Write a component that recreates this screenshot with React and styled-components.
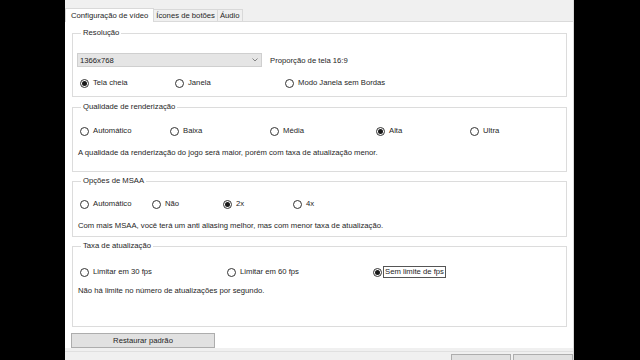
import React from "react";
import styled, { createGlobalStyle } from "styled-components";

const Global = createGlobalStyle`
  html, body { margin: 0; padding: 0; background: #000; }
  body { width: 640px; height: 360px; overflow: hidden; font-family: "Liberation Sans", Arial, sans-serif; }
`;

const Screen = styled.div`
  display: flex;
  width: 640px;
  height: 360px;
  background: #000;
`;

const Window = styled.div`
  margin-left: 65px;
  width: 508px;
  height: 360px;
  background: #f0f0f0;
  border-right: 1px solid #d9d9d9;
  display: flex;
  flex-direction: column;
  font-size: 7.7px;
  color: #1e1e1e;
`;

const TabStrip = styled.div`
  height: 22px;
  display: flex;
  align-items: flex-end;
  background: #f0f0f0;
  border-bottom: 1px solid #dadada;
  box-sizing: border-box;
`;

const Tab = styled.div`
  height: ${(p) => (p.$active ? 14 : 12)}px;
  padding: 0 ${(p) => (p.$active ? 5 : 2)}px;
  display: flex;
  align-items: center;
  background: ${(p) => (p.$active ? "#fff" : "#f0f0f0")};
  border: 1px solid #d9d9d9;
  border-bottom: none;
  margin-left: ${(p) => (p.$active ? 0 : -1)}px;
  margin-bottom: ${(p) => (p.$active ? -1 : 0)}px;
  box-sizing: border-box;
  white-space: nowrap;
`;

const Content = styled.div`
  flex: 1;
  background: #fff;
  display: flex;
  flex-direction: column;
  padding: 4px 6px 0 7px;
`;

const Group = styled.fieldset`
  margin: ${(p) => p.$mt}px 0 0 0;
  padding: 0 0 0 7px;
  height: ${(p) => p.$h}px;
  box-sizing: border-box;
  border: 1px solid #dcdcdc;
  display: flex;
  flex-direction: column;
  min-width: 0;
`;

const Legend = styled.legend`
  padding: 0 2px;
  margin-left: 1px;
  font-size: 7.7px;
  line-height: 10px;
`;

const Row = styled.div`
  display: flex;
  align-items: center;
  margin-top: ${(p) => p.$mt}px;
  height: 14px;
`;

const Select = styled.div`
  width: 185px;
  height: 14px;
  box-sizing: border-box;
  background: #e5e5e5;
  border: 1px solid #cfcfcf;
  display: flex;
  align-items: center;
  justify-content: space-between;
  padding: 0 3px 0 2px;
  margin-left: -3px;
`;

const Chevron = styled.svg`
  width: 6px;
  height: 4px;
`;

const SideLabel = styled.span`
  margin-left: 8px;
`;

const Options = styled.div`
  display: grid;
  grid-template-columns: ${(p) => p.$cols};
  align-items: center;
  margin-top: ${(p) => p.$mt}px;
  height: 12px;
`;

const Option = styled.div`
  display: flex;
  align-items: center;
  gap: 4px;
  white-space: nowrap;
`;

const Circle = styled.span`
  width: 9px;
  height: 9px;
  box-sizing: border-box;
  border-radius: 50%;
  border: 1px solid #333;
  background: #fff;
  display: flex;
  align-items: center;
  justify-content: center;
  flex: none;
  &::after {
    content: "";
    width: 5px;
    height: 5px;
    border-radius: 50%;
    background: #1a1a1a;
    display: ${(p) => (p.$on ? "block" : "none")};
  }
`;

const OptText = styled.span`
  outline: ${(p) => (p.$focus ? "1px solid #555" : "none")};
  padding: ${(p) => (p.$focus ? "0 1px" : "0")};
  margin-left: ${(p) => (p.$focus ? "-2px" : "0")};
  line-height: 10px;
`;

const Note = styled.div`
  margin-top: ${(p) => p.$mt}px;
  margin-left: -2px;
  white-space: nowrap;
`;

const Button = styled.div`
  margin-top: 6px;
  width: 144px;
  height: 15px;
  box-sizing: border-box;
  background: #e1e1e1;
  border: 1px solid #adadad;
  display: flex;
  align-items: center;
  justify-content: center;
  margin-left: -1px;
`;

const Footer = styled.div`
  height: 6px;
  margin-top: 3px;
  background: #f0f0f0;
  border-top: 1px solid #e0e0e0;
  display: flex;
  justify-content: flex-end;
  gap: 2px;
  padding-top: 2px;
`;

const FootBtn = styled.div`
  width: 58px;
  height: 6px;
  background: #e1e1e1;
  border: 1px solid #adadad;
  border-bottom: none;
`;

function Radio({ label, on, focus }) {
  return (
    <Option>
      <Circle $on={on} />
      <OptText $focus={focus}>{label}</OptText>
    </Option>
  );
}

export default function App() {
  return (
    <>
      <Global />
      <Screen>
        <Window>
          <TabStrip>
            <Tab $active>Configuração de vídeo</Tab>
            <Tab>Ícones de botões</Tab>
            <Tab>Áudio</Tab>
          </TabStrip>
          <Content>
            <Group $mt={2} $h={69}>
              <Legend>Resolução</Legend>
              <Row $mt={15}>
                <Select>
                  <span>1366x768</span>
                  <Chevron viewBox="0 0 6 4">
                    <path d="M0.5 0.5 L3 3 L5.5 0.5" fill="none" stroke="#777" strokeWidth="0.9" />
                  </Chevron>
                </Select>
                <SideLabel>Proporção de tela 16:9</SideLabel>
              </Row>
              <Options $mt={10} $cols="95px 110px 1fr">
                <Radio label="Tela cheia" on />
                <Radio label="Janela" />
                <Radio label="Modo Janela sem Bordas" />
              </Options>
            </Group>
            <Group $mt={5} $h={70}>
              <Legend>Qualidade de renderização</Legend>
              <Options $mt={13} $cols="90px 100px 106px 94px 1fr">
                <Radio label="Automático" />
                <Radio label="Baixa" />
                <Radio label="Média" />
                <Radio label="Alta" on />
                <Radio label="Ultra" />
              </Options>
              <Note $mt={11}>A qualidade da renderização do jogo será maior, porém com taxa de atualização menor.</Note>
            </Group>
            <Group $mt={4} $h={61}>
              <Legend>Opções de MSAA</Legend>
              <Options $mt={12} $cols="72px 71px 70px 1fr">
                <Radio label="Automático" />
                <Radio label="Não" />
                <Radio label="2x" on />
                <Radio label="4x" />
              </Options>
              <Note $mt={11}>Com mais MSAA, você terá um anti aliasing melhor, mas com menor taxa de atualização.</Note>
            </Group>
            <Group $mt={4} $h={86}>
              <Legend>Taxa de atualização</Legend>
              <Options $mt={15} $cols="147px 146px 1fr">
                <Radio label="Limitar em 30 fps" />
                <Radio label="Limitar em 60 fps" />
                <Radio label="Sem limite de fps" on focus />
              </Options>
              <Note $mt={8}>Não há limite no número de atualizações por segundo.</Note>
            </Group>
            <Button>Restaurar padrão</Button>
          </Content>
          <Footer>
            <FootBtn />
            <FootBtn />
          </Footer>
        </Window>
      </Screen>
    </>
  );
}
